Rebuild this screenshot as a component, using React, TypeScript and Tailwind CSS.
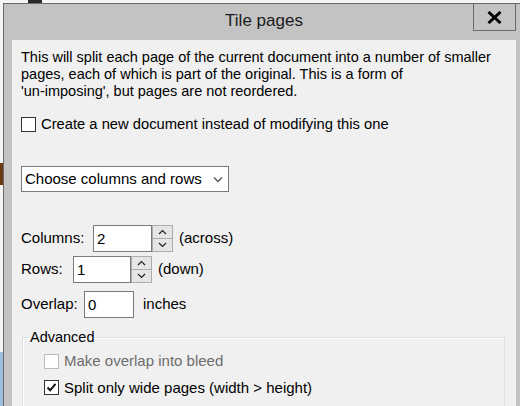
import React from "react"

function CheckBox({ checked = false, disabled = false }: { checked?: boolean; disabled?: boolean }) {
    return (
        <span
            className={`flex h-[15px] w-[15px] shrink-0 items-center justify-center border bg-white ${disabled ? "border-[#bcbcbc]" : "border-[#333333]"}`}
        >
            {checked && (
                <svg width="11" height="11" viewBox="0 0 11 11">
                    <path d="M1.5 5.5 L4.2 8.3 L9.5 1.8" fill="none" stroke="#111" strokeWidth="2" />
                </svg>
            )}
        </span>
    )
}

function Spinner() {
    return (
        <div className="flex flex-col">
            <button className="flex h-[14px] w-[21px] items-center justify-center border border-[#adadad] bg-[#e5e5e5]">
                <svg width="9" height="6" viewBox="0 0 9 6">
                    <path d="M1 5 L4.5 1.5 L8 5" fill="none" stroke="#222" strokeWidth="1.2" />
                </svg>
            </button>
            <button className="flex h-[13px] w-[21px] items-center justify-center border border-t-0 border-[#adadad] bg-[#e5e5e5]">
                <svg width="9" height="6" viewBox="0 0 9 6">
                    <path d="M1 1 L4.5 4.5 L8 1" fill="none" stroke="#222" strokeWidth="1.2" />
                </svg>
            </button>
        </div>
    )
}

function NumberBox({ value, width }: { value: string; width: string }) {
    return (
        <div className={`flex h-[27px] items-start border border-[#7a7a7a] bg-white pl-[3px] pt-[2px] ${width}`}>
            {value}
        </div>
    )
}

export default function App() {
    return (
        <div className="relative h-[406px] w-[520px] overflow-hidden bg-[#f4f4f4] pl-[3px] pt-[3px] font-['Liberation_Sans',Arial,sans-serif] text-black">
            {/* bits of the window behind */}
            <div className="absolute left-[28px] top-0 h-[3px] w-[14px] bg-[#2a2a2a]" />
            <div className="absolute left-0 top-[163px] h-[22px] w-[3px] bg-[#6a3a10]" />
            <div className="absolute left-0 top-[352px] h-[54px] w-[3px] bg-[#9dbde0]" />

            <div className="relative w-[522px] border border-[#6b6b6b] bg-[#c3c3c3] px-[8px] pb-[8px]">
                {/* Title bar */}
                <div className="flex h-[36px] items-center justify-center pb-[2px] text-[17px] text-[#1b1b1b]">
                    Tile pages
                </div>
                <button className="absolute right-[8px] top-[-1px] flex h-[28px] w-[43px] items-center justify-center border border-[#6b6b6b] bg-[#c3c3c3]">
                    <svg width="15" height="13" viewBox="0 0 15 13">
                        <path d="M1.5 1 L13.5 12 M13.5 1 L1.5 12" stroke="#000" strokeWidth="3" />
                    </svg>
                </button>

                {/* Client */}
                <div className="h-[400px] bg-[#f0f0f0] pl-[9px] pt-[9px] text-[15px]">
                    <p className="text-[14.5px] leading-[17px]">
                        This will split each page of the current document into a number of smaller
                        <br />
                        pages, each of which is part of the original. This is a form of
                        <br />
                        'un-imposing', but pages are not reordered.
                    </p>

                    <label className="mt-[16px] flex items-center gap-[5px] text-[14.75px] leading-[17px]">
                        <CheckBox />
                        <span>Create a new document instead of modifying this one</span>
                    </label>

                    <div className="mt-[33px] flex h-[26px] w-[208px] items-center justify-between border border-[#7a7a7a] bg-white pl-[3px] pr-[5px]">
                        <span>Choose columns and rows</span>
                        <svg width="10" height="7" viewBox="0 0 10 7">
                            <path d="M1 1.5 L5 5.5 L9 1.5" fill="none" stroke="#555" strokeWidth="1.3" />
                        </svg>
                    </div>

                    <div className="mt-[33px] flex flex-col gap-[4px]">
                        <div className="flex items-center">
                            <span className="w-[72px]">Columns:</span>
                            <NumberBox value="2" width="w-[59px]" />
                            <Spinner />
                            <span className="ml-[6px]">(across)</span>
                        </div>
                        <div className="flex items-center">
                            <span className="w-[52px]">Rows:</span>
                            <NumberBox value="1" width="w-[58px]" />
                            <Spinner />
                            <span className="ml-[6px]">(down)</span>
                        </div>
                        <div className="mt-[4px] flex items-center">
                            <span className="w-[63px]">Overlap:</span>
                            <NumberBox value="0" width="w-[50px]" />
                            <span className="ml-[9px]">inches</span>
                        </div>
                    </div>

                    <fieldset className="ml-[1px] mt-[11px] h-[120px] w-[483px] border border-[#d5dfe5] pl-[21px] pt-[5px] shadow-[inset_1px_1px_0_#ffffff]">
                        <legend className="-ml-[16px] px-[2px] text-[14.5px] leading-[16px]">Advanced</legend>
                        <label className="flex items-center gap-[5px] text-[#6d6d6d]">
                            <CheckBox disabled />
                            <span>Make overlap into bleed</span>
                        </label>
                        <label className="mt-[4px] flex items-center gap-[5px]">
                            <CheckBox checked />
                            <span>Split only wide pages (width &gt; height)</span>
                        </label>
                    </fieldset>
                </div>
            </div>
        </div>
    )
}
